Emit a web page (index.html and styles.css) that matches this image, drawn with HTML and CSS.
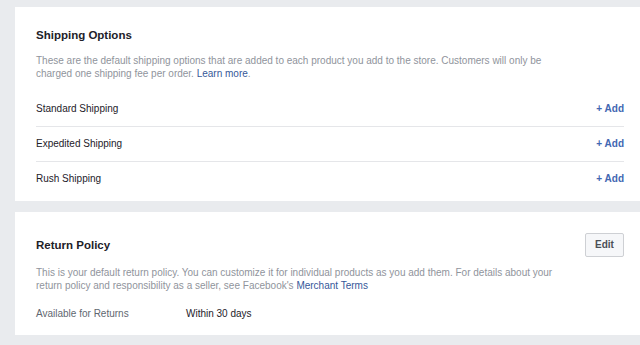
FILE: index.html
```html
<!DOCTYPE html>
<html lang="en">
<head>
<meta charset="utf-8">
<title>Shipping and Returns</title>
<link rel="stylesheet" href="styles.css">
</head>
<body>
<main class="page">
  <section class="card shipping">
    <h2 class="card-title">Shipping Options</h2>
    <p class="card-desc">These are the default shipping options that are added to each product you add to the store. Customers will only be charged one shipping fee per order. <a class="link" href="#">Learn more</a>.</p>
    <ul class="options">
      <li class="option"><span class="option-name">Standard Shipping</span><a class="add" href="#">+ Add</a></li>
      <li class="option"><span class="option-name">Expedited Shipping</span><a class="add" href="#">+ Add</a></li>
      <li class="option"><span class="option-name">Rush Shipping</span><a class="add" href="#">+ Add</a></li>
    </ul>
  </section>
  <section class="card returns">
    <div class="card-head">
      <h2 class="card-title">Return Policy</h2>
      <button class="btn" type="button">Edit</button>
    </div>
    <p class="card-desc returns-desc">This is your default return policy. You can customize it for individual products as you add them. For details about your return policy and responsibility as a seller, see Facebook's <a class="link" href="#">Merchant Terms</a></p>
    <div class="detail">
      <span class="detail-label">Available for Returns</span>
      <span class="detail-value">Within 30 days</span>
    </div>
  </section>
</main>
</body>
</html>
```

FILE: styles.css
```css
html, body {
  margin: 0;
  padding: 0;
  background: #e9ebee;
  font-family: "Liberation Sans", Arial, Helvetica, sans-serif;
  color: #1d2129;
}

.page {
  display: flex;
  flex-direction: column;
  gap: 11px;
  padding: 7px 0 0 15px;
}

.card {
  background: #ffffff;
  padding: 21px 16px 0 21px;
}

.card-title {
  margin: 0;
  font-size: 11.5px;
  line-height: 14px;
  font-weight: bold;
  color: #1d2129;
}

.card-desc {
  margin: 11.5px 0 0 0;
  max-width: 530px;
  font-size: 10px;
  line-height: 13px;
  color: #90949c;
}

.link {
  color: #365899;
  text-decoration: none;
}

.options {
  list-style: none;
  margin: 11px 0 0 0;
  padding: 0 0 5px 0;
}

.option {
  display: flex;
  align-items: center;
  justify-content: space-between;
  height: 35px;
  font-size: 10px;
}

.option + .option {
  border-top: 1px solid #e5e6e9;
  height: 34px;
}

.option-name {
  color: #1d2129;
}

.add {
  color: #4267b2;
  font-weight: bold;
  text-decoration: none;
}

.returns {
  padding-bottom: 15px;
}

.card-head {
  display: flex;
  align-items: center;
  justify-content: space-between;
}

.btn {
  width: 39px;
  height: 24px;
  padding: 0;
  border: 1px solid #ced0d4;
  border-radius: 2px;
  background: #f6f7f9;
  color: #4b4f56;
  font-family: inherit;
  font-size: 10px;
  font-weight: bold;
}

.returns-desc {
  margin-top: 9px;
  line-height: 13.5px;
}

.detail {
  display: flex;
  margin-top: 14px;
  font-size: 10px;
  line-height: 13px;
}

.detail-label {
  width: 150px;
  color: #616770;
}

.detail-value {
  color: #1d2129;
}
```
